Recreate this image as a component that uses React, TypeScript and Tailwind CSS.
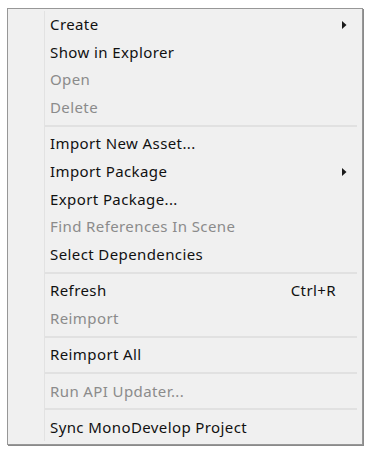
type Item =
  | { kind: "item"; label: string; disabled?: boolean; submenu?: boolean; shortcut?: string }
  | { kind: "sep" };

const items: Item[] = [
  { kind: "item", label: "Create", submenu: true },
  { kind: "item", label: "Show in Explorer" },
  { kind: "item", label: "Open", disabled: true },
  { kind: "item", label: "Delete", disabled: true },
  { kind: "sep" },
  { kind: "item", label: "Import New Asset..." },
  { kind: "item", label: "Import Package", submenu: true },
  { kind: "item", label: "Export Package..." },
  { kind: "item", label: "Find References In Scene", disabled: true },
  { kind: "item", label: "Select Dependencies" },
  { kind: "sep" },
  { kind: "item", label: "Refresh", shortcut: "Ctrl+R" },
  { kind: "item", label: "Reimport", disabled: true },
  { kind: "sep" },
  { kind: "item", label: "Reimport All" },
  { kind: "sep" },
  { kind: "item", label: "Run API Updater...", disabled: true },
  { kind: "sep" },
  { kind: "item", label: "Sync MonoDevelop Project" },
];

function SubArrow() {
  return (
    <svg width="5" height="8" viewBox="0 0 5 8" aria-hidden>
      <path d="M0 0 L4.5 4 L0 8 Z" fill="#1a1a1a" />
    </svg>
  );
}

export default function App() {
  return (
    <div className="w-[377px] h-[456px] bg-white pt-[8px] pl-[7px]">
      <div
        className="w-[356px] bg-[#f0f0f0] border border-[#979797] shadow-[1px_1px_0_#8a8a8a] flex p-[2px] pb-[3px] text-[15px] leading-none tracking-[0.4px]"
        style={{ fontFamily: '"Noto Sans", "Open Sans", sans-serif' }}
      >
        <div className="w-[34px] shrink-0" />
        <div className="flex-1 border-l border-[#e2e2e2] pr-[1px]">
          {items.map((it, i) =>
            it.kind === "sep" ? (
              <div key={i} className="h-[8.8px] flex items-center pr-[2px]">
                <div className="w-full h-[2px] bg-[#e1e1e1]" />
              </div>
            ) : (
              <div
                key={i}
                className={`h-[27.6px] flex items-center pl-[5px] pr-[12px] ${
                  it.disabled ? "text-[#8b8b8b]" : "text-[#111]"
                }`}
              >
                <span className="flex-1">{it.label}</span>
                {it.shortcut && <span className="mr-[6px]">{it.shortcut}</span>}
                <span className="w-[5px] flex items-center">
                  {it.submenu && <SubArrow />}
                </span>
              </div>
            )
          )}
        </div>
      </div>
    </div>
  );
}
